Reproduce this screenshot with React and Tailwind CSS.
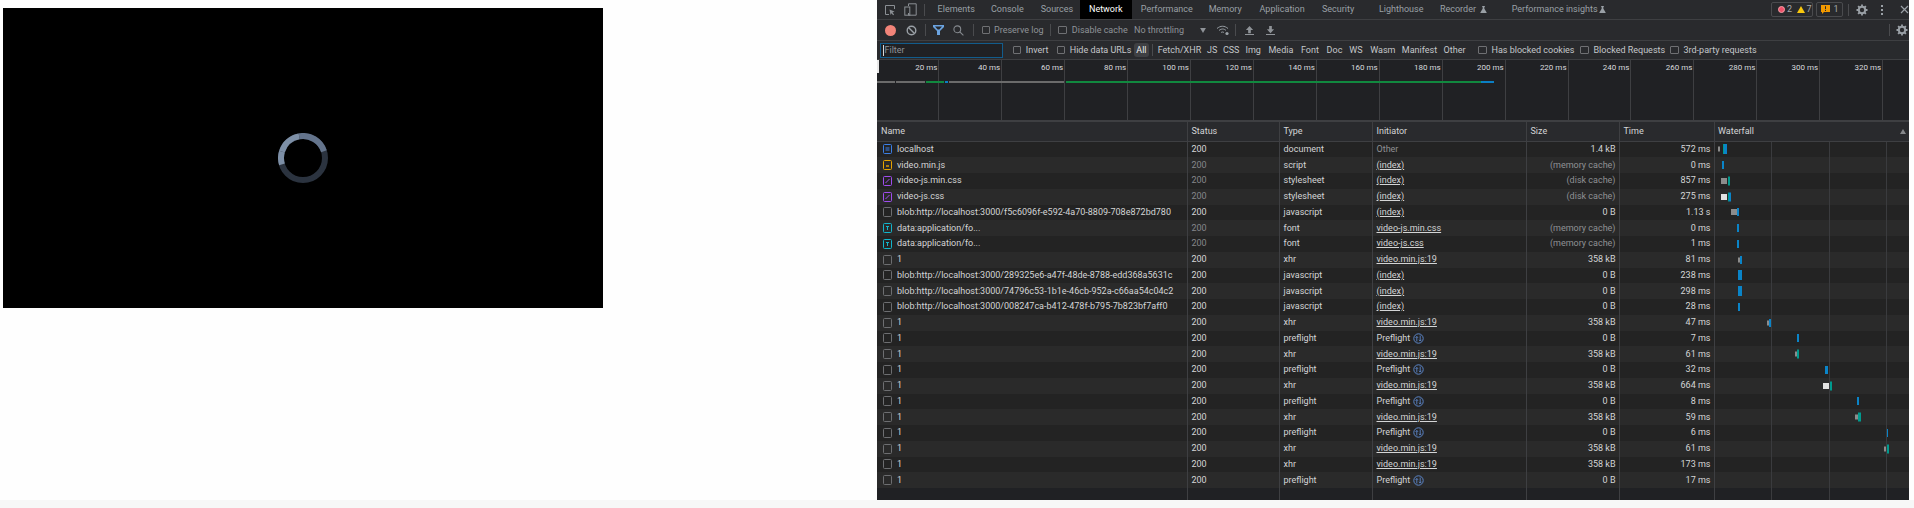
const Check = () => <span className="block flex-none w-[8.5px] h-[8.5px] border border-[#6f7073] rounded-[1px]" />
const Sep = ({ className = '' }) => <span className={`block flex-none w-px h-[12px] bg-[#4a4b4e] ${className}`} />

const Flask = () => (
  <svg viewBox="0 0 8 8" className="w-[7px] h-[7px] flex-none" fill="#9aa0a6">
    <path d="M2.5 0h3v1H5v2.2L7.6 7.4c.2.3 0 .6-.3.6H.7c-.3 0-.5-.3-.3-.6L3 3.2V1h-.5z" />
  </svg>
)

const Gear = () => (
  <svg viewBox="0 0 12 12" className="w-[12px] h-[12px] flex-none" fill="none">
    <circle cx="6" cy="6" r="3.2" stroke="#9aa0a6" strokeWidth="2" />
    <path d="M6 .5v2M6 9.5v2M.5 6h2M9.5 6h2M2.1 2.1l1.4 1.4M8.5 8.5l1.4 1.4M2.1 9.9l1.4-1.4M8.5 3.5l1.4-1.4" stroke="#9aa0a6" strokeWidth="1.8" />
  </svg>
)

const tabs = [
  ['Elements', 'w-[53.4px]'],
  ['Console', 'w-[49.7px]'],
  ['Sources', 'w-[39.3px]'],
]
const tabs2 = [
  ['Performance', 'w-[67.9px]'],
  ['Memory', 'w-[50.8px]'],
  ['Application', 'w-[62.5px]'],
  ['Security', 'w-[57px]'],
  ['Lighthouse', 'w-[61px]'],
  ['Recorder', 'w-[40px]'],
]

const TabBar = () => (
  <div className="h-[20px] flex items-center flex-none bg-[#292a2d] border-b border-[#3e3f42] text-[#9aa0a6]">
    <svg viewBox="0 0 12 12" className="w-[12px] h-[12px] ml-[7px] flex-none" fill="none" stroke="#8b8f94">
      <path d="M5 10.5H1.5v-9h9V5" />
      <path d="M5.5 5.5l5 2-2 1 1.6 2-1 .8-1.6-2-1 1.6z" fill="#8b8f94" stroke="none" />
    </svg>
    <svg viewBox="0 0 13 13" className="w-[13px] h-[13px] ml-[7.5px] flex-none" fill="none" stroke="#8b8f94">
      <path d="M4.5 3V.8h7.7v11.4H4.5V10" />
      <rect x="0.8" y="4" width="5" height="8.2" />
    </svg>
    <Sep className="ml-[7.5px]" />
    <div className="ml-[12.6px] flex items-center h-full whitespace-nowrap">
      {tabs.map(([t, w]) => <span key={t} className={`${w} flex-none`}>{t}</span>)}
      <span className="w-[52px] flex-none h-full flex items-center pl-[9px] bg-black text-white">Network</span>
      <span className="w-[8.8px] flex-none" />
      {tabs2.map(([t, w]) => <span key={t} className={`${w} flex-none`}>{t}</span>)}
      <Flask />
      <span className="ml-[24.7px] w-[87.3px] flex-none">Performance insights</span>
      <Flask />
    </div>
    <div className="ml-auto flex items-center h-full">
      <div className="w-[42.5px] h-[15px] border border-[#4a4b4e] rounded-[2px] flex items-center pl-[6px] text-[#a5a8ac]">
        <span className="w-[7px] h-[7px] rounded-full bg-[#f0526a] border-[1.5px] border-[#f6a0a8] flex-none" />
        <span className="ml-[2.5px] w-[10px]">2</span>
        <svg viewBox="0 0 8 7" className="w-[8px] h-[7px] flex-none"><path d="M4 0l4 7H0z" fill="#f9c80e" /></svg>
        <span className="ml-[1.5px]">7</span>
      </div>
      <div className="ml-[2.5px] w-[27px] h-[15px] border border-[#4a4b4e] rounded-[2px] flex items-center pl-[4px] text-[#a5a8ac]">
        <svg viewBox="0 0 9 9" className="w-[9px] h-[9px] flex-none">
          <path d="M0 0h9v7H3L1 9V7H0z" fill="#f29900" />
          <rect x="4" y="1.2" width="1" height="3" fill="#292a2d" />
          <rect x="4" y="5" width="1" height="1" fill="#292a2d" />
        </svg>
        <span className="ml-[4px]">1</span>
      </div>
      <Sep className="ml-[5.5px]" />
      <span className="ml-[7px] flex"><Gear /></span>
      <span className="ml-[13px] flex flex-col gap-[2px]">
        <span className="w-[2px] h-[2px] bg-[#9aa0a6]" />
        <span className="w-[2px] h-[2px] bg-[#9aa0a6]" />
        <span className="w-[2px] h-[2px] bg-[#9aa0a6]" />
      </span>
      <svg viewBox="0 0 9 9" className="ml-[17px] w-[9px] h-[9px] flex-none" stroke="#9aa0a6" strokeWidth="1.2">
        <path d="M1 1l7 7M8 1l-7 7" />
      </svg>
    </div>
  </div>
)

const Toolbar = () => (
  <div className="h-[21px] flex items-center flex-none bg-[#292a2d] border-b border-[#3e3f42] text-[#8f9398]">
    <span className="ml-[7.5px] w-[11px] h-[11px] rounded-full bg-[#f28479] flex-none" />
    <svg viewBox="0 0 11 11" className="ml-[10px] w-[11px] h-[11px] flex-none" fill="none" stroke="#9aa0a6" strokeWidth="1.4">
      <circle cx="5.5" cy="5.5" r="4.3" />
      <path d="M2.5 2.5l6 6" />
    </svg>
    <Sep className="ml-[8px]" />
    <svg viewBox="0 0 11 10" className="ml-[7.5px] w-[11px] h-[10px] flex-none">
      <path d="M0 0h11v2L7 6v4H4V6L0 2z" fill="#6ba3e0" />
      <path d="M2 1.5h7L6.3 4.5H4.7z" fill="#292a2d" />
    </svg>
    <svg viewBox="0 0 11 11" className="ml-[9px] w-[11px] h-[11px] flex-none" fill="none" stroke="#85898e" strokeWidth="1.1">
      <circle cx="4.3" cy="4.3" r="3.4" />
      <path d="M6.8 6.8l3.6 3.6" />
    </svg>
    <Sep className="ml-[8.5px]" />
    <span className="ml-[8px]"><Check /></span>
    <span className="ml-[4px] w-[48.4px] flex-none whitespace-nowrap">Preserve log</span>
    <Sep className="ml-[7.6px]" />
    <span className="ml-[7.3px]"><Check /></span>
    <span className="ml-[5px] w-[53.2px] flex-none whitespace-nowrap">Disable cache</span>
    <span className="ml-[9px] w-[51.4px] flex-none whitespace-nowrap">No throttling</span>
    <svg viewBox="0 0 7 6" className="ml-[14.6px] w-[6px] h-[5px] flex-none"><path d="M0 0h7L3.5 6z" fill="#8f9398" /></svg>
    <svg viewBox="0 0 14 11" className="ml-[9.6px] w-[14px] h-[11px] flex-none" fill="none" stroke="#9aa0a6" strokeWidth="1">
      <path d="M1 3.5C4.5.5 8.5.5 12 3.5M3 5.5c2.5-2 5-2 7 0M5 7.6c1-.8 2-.8 3 0" />
      <circle cx="11" cy="8.5" r="1.6" fill="#9aa0a6" stroke="none" />
    </svg>
    <Sep className="ml-[5.8px]" />
    <svg viewBox="0 0 10 10" className="ml-[8.4px] w-[9px] h-[9px] flex-none" fill="#8f9398">
      <path d="M5 0l4 4.5H6.5V8h-3V4.5H1zM0 9h10v1H0z" />
    </svg>
    <svg viewBox="0 0 10 10" className="ml-[12.3px] w-[9px] h-[9px] flex-none" fill="#8f9398">
      <path d="M3.5 0h3v3.5H9L5 8 1 3.5h2.5zM0 9h10v1H0z" />
    </svg>
    <div className="ml-auto flex items-center">
      <Sep />
      <span className="ml-[6px] mr-[0.7px] flex"><Gear /></span>
    </div>
  </div>
)

const types = [
  ['Fetch/XHR', 'w-[49.3px]'],
  ['JS', 'w-[16px]'],
  ['CSS', 'w-[22.6px]'],
  ['Img', 'w-[23px]'],
  ['Media', 'w-[32.4px]'],
  ['Font', 'w-[25.7px]'],
  ['Doc', 'w-[22.7px]'],
  ['WS', 'w-[20.9px]'],
  ['Wasm', 'w-[31.7px]'],
  ['Manifest', 'w-[41.7px]'],
  ['Other', 'w-[34.6px]'],
]

const FilterBar = () => (
  <div className="h-[19px] flex items-center flex-none bg-[#292a2d] border-b border-[#3e3f42] text-[#c4c7ca]">
    <div className="ml-[2.5px] w-[123px] h-[15px] flex-none flex items-center border border-[#125c8c] bg-[#202124] pl-[2px] text-[#8f9398]">
      <span className="w-px h-[11px] bg-[#d8d8d8] mr-px" />Filter
    </div>
    <span className="ml-[10.2px]"><Check /></span>
    <span className="ml-[4.6px] w-[22.2px] flex-none">Invert</span>
    <span className="ml-[8.6px]"><Check /></span>
    <span className="ml-[4.7px] w-[59.8px] flex-none whitespace-nowrap">Hide data URLs</span>
    <span className="ml-[4.4px] w-[15px] h-[14px] flex-none flex items-center justify-center rounded-[3px] bg-[#3f4043] text-[#e8eaed]">All</span>
    <Sep className="ml-[3.3px]" />
    <div className="ml-[4.4px] flex items-center">
      {types.map(([t, w]) => <span key={t} className={`${w} flex-none whitespace-nowrap`}>{t}</span>)}
    </div>
    <Check />
    <span className="ml-[4.9px] w-[80.6px] flex-none whitespace-nowrap">Has blocked cookies</span>
    <span className="ml-[8px]"><Check /></span>
    <span className="ml-[4.9px] w-[68.6px] flex-none whitespace-nowrap">Blocked Requests</span>
    <span className="ml-[8px]"><Check /></span>
    <span className="ml-[4.9px] w-[73.3px] flex-none whitespace-nowrap">3rd-party requests</span>
  </div>
)

const ticks = [20, 40, 60, 80, 100, 120, 140, 160, 180, 200, 220, 240, 260, 280, 300, 320]

const strip = [
  'w-[18px] bg-[#6b6b6b]',
  'w-[29px] bg-[#6b6b6b] ml-[1px]',
  'w-[18px] bg-[#11893f] ml-[1px]',
  'w-[3px] bg-[#0b7fc4] ml-[1px]',
  'w-[115px] bg-[#6b6b6b] ml-[1px]',
  'w-[415px] bg-[#11893f] ml-[2px]',
  'w-[13px] bg-[#0b7fc4]',
]

const Overview = () => (
  <div className="relative h-[62px] flex-none flex bg-[#202124] border-b-2 border-[#3e3f42] text-[#d8dade] text-[8px]">
    {ticks.map((t, i) => (
      <div key={t} className={`${i === 0 ? 'w-[62.3px]' : 'w-[62.93px]'} flex-none border-r border-[#3e3f42] text-right pr-[1px] pt-[4px] whitespace-nowrap`}>
        {t} ms
      </div>
    ))}
    <span className="absolute left-0 top-0 w-[1.5px] h-[13px] bg-[#e8e8e8]" />
    <div className="absolute left-0 top-[21px] h-[2px] flex">
      {strip.map((c, i) => <span key={i} className={`block h-full flex-none ${c}`} />)}
    </div>
  </div>
)

const FileIcon = ({ kind }) => {
  if (kind === 'doc') return (
    <svg viewBox="0 0 9 10" className="w-[9px] h-[10px] flex-none" fill="none">
      <rect x="0.5" y="0.5" width="8" height="9" rx="1" stroke="#3b7fe6" />
      <path d="M2.5 4h4M2.5 6h4" stroke="#3b7fe6" />
    </svg>
  )
  if (kind === 'js') return (
    <svg viewBox="0 0 9 10" className="w-[9px] h-[10px] flex-none" fill="none">
      <rect x="0.5" y="0.5" width="8" height="9" rx="1" stroke="#e8a400" />
      <path d="M3 6h3" stroke="#e8a400" strokeWidth="1.4" />
    </svg>
  )
  if (kind === 'css') return (
    <svg viewBox="0 0 9 10" className="w-[9px] h-[10px] flex-none" fill="none">
      <rect x="0.5" y="0.5" width="8" height="9" rx="1" stroke="#a04df0" />
      <path d="M2.5 7l4-4" stroke="#a04df0" />
    </svg>
  )
  if (kind === 'font') return (
    <svg viewBox="0 0 9 10" className="w-[9px] h-[10px] flex-none" fill="none">
      <rect x="0.5" y="0.5" width="8" height="9" rx="1" stroke="#12b5cb" />
      <path d="M3 3.5h3M4.5 3.5v3.5" stroke="#12b5cb" />
    </svg>
  )
  return (
    <svg viewBox="0 0 9 10" className="w-[9px] h-[10px] flex-none" fill="none">
      <rect x="0.5" y="0.5" width="8" height="9" rx="1" stroke="#6d6e71" />
    </svg>
  )
}

const Globe = () => (
  <svg viewBox="0 0 11 11" className="w-[11px] h-[11px] flex-none ml-[2.5px]" fill="none" stroke="#5c86c9">
    <circle cx="5.5" cy="5.5" r="4.7" />
    <path d="M3.8 8.5v-5M2.6 4.8l1.2-1.3L5 4.8M7.2 2.5v5.5M6 6.8l1.2 1.3 1.2-1.3" strokeWidth="0.9" />
  </svg>
)

const INDEX = '(index)'
const VID = 'video.min.js:19'
const B = '#0a84c8'
const T = '#009a8e'
const G = '#8c8c8c'
const W = '#e2e2e2'

// bars: [left from waterfall cell, width, colour, height]
const rows = [
  ['doc', 'localhost', 1, 'document', 'Other', '1.4 kB', '572 ms', [[3, 2, G, 5], [7.7, 1.3, T, 10], [9, 2.7, B, 10]]],
  ['js', 'video.min.js', 0, 'script', INDEX, '(memory cache)', '0 ms', [[6.5, 2, B, 8]]],
  ['css', 'video-js.min.css', 0, 'stylesheet', INDEX, '(disk cache)', '857 ms', [[6, 6, G, 6], [12.7, 2.3, T, 9]]],
  ['css', 'video-js.css', 0, 'stylesheet', INDEX, '(disk cache)', '275 ms', [[6, 6, W, 6], [13, 1, T, 9], [14, 2, B, 9]]],
  ['', 'blob:http://localhost:3000/f5c6096f-e592-4a70-8809-708e872bd780', 1, 'javascript', INDEX, '0 B', '1.13 s', [[16.3, 6, G, 6], [22.3, 2, B, 8]]],
  ['font', 'data:application/fo...', 0, 'font', 'video-js.min.css', '(memory cache)', '0 ms', [[22.3, 1.7, B, 8]]],
  ['font', 'data:application/fo...', 0, 'font', 'video-js.css', '(memory cache)', '1 ms', [[22.3, 1.7, B, 8]]],
  ['', '1', 1, 'xhr', VID, '358 kB', '81 ms', [[22.5, 2, G, 5], [24.7, 2, B, 8]]],
  ['', 'blob:http://localhost:3000/289325e6-a47f-48de-8788-edd368a5631c', 1, 'javascript', INDEX, '0 B', '238 ms', [[23, 3.7, B, 10]]],
  ['', 'blob:http://localhost:3000/74796c53-1b1e-46cb-952a-c66aa54c04c2', 1, 'javascript', INDEX, '0 B', '298 ms', [[23, 3.7, B, 10]]],
  ['', 'blob:http://localhost:3000/008247ca-b412-478f-b795-7b823bf7aff0', 1, 'javascript', INDEX, '0 B', '28 ms', [[23, 2, B, 8]]],
  ['', '1', 1, 'xhr', VID, '358 kB', '47 ms', [[51.7, 2.3, G, 5], [54, 2.3, B, 8]]],
  ['', '1', 1, 'preflight', 'Preflight', '0 B', '7 ms', [[82.3, 2, B, 8]]],
  ['', '1', 1, 'xhr', VID, '358 kB', '61 ms', [[79.7, 2.3, G, 5], [82, 2.3, T, 9]]],
  ['', '1', 1, 'preflight', 'Preflight', '0 B', '32 ms', [[110.3, 2.4, B, 8]]],
  ['', '1', 1, 'xhr', VID, '358 kB', '664 ms', [[108.3, 6, W, 6], [114.3, 2.7, T, 9]]],
  ['', '1', 1, 'preflight', 'Preflight', '0 B', '8 ms', [[142.3, 2, B, 8]]],
  ['', '1', 1, 'xhr', VID, '358 kB', '59 ms', [[140.3, 2.7, G, 5], [143, 2.7, T, 9]]],
  ['', '1', 1, 'preflight', 'Preflight', '0 B', '6 ms', [[171, 2, B, 8]]],
  ['', '1', 1, 'xhr', VID, '358 kB', '61 ms', [[169, 2.7, G, 5], [171.7, 2.6, T, 9]]],
  ['', '1', 1, 'xhr', VID, '358 kB', '173 ms', []],
  ['', '1', 1, 'preflight', 'Preflight', '0 B', '17 ms', []],
]

const grid = 'grid grid-cols-[311px_92px_93px_154px_93px_95px_1fr]'
const cell = 'border-r border-[#3e3f42] flex items-center overflow-hidden whitespace-nowrap'

const Row = ({ row, index }) => {
  const [kind, name, live, type, init, size, time, bars] = row
  const dimSize = size.startsWith('(')
  return (
    <div className={`${grid} h-[15.76px] text-[#d4d5d6] ${index % 2 ? 'bg-[#2a2a2a]' : 'bg-[#232323]'}`}>
      <div className={`${cell} pl-[6px]`}>
        <FileIcon kind={kind} />
        <span className="ml-[5px]">{name}</span>
      </div>
      <div className={`${cell} pl-[3.5px] ${live ? '' : 'text-[#85878a]'}`}>200</div>
      <div className={`${cell} pl-[3.5px]`}>{type}</div>
      <div className={`${cell} pl-[3.5px]`}>
        {init === 'Other' && <span className="text-[#8f9194]">Other</span>}
        {init === 'Preflight' && <><span>Preflight</span><Globe /></>}
        {init !== 'Other' && init !== 'Preflight' && <span className="underline">{init}</span>}
      </div>
      <div className={`${cell} justify-end pr-[3.5px] ${dimSize ? 'text-[#8f9194]' : ''}`}>{size}</div>
      <div className={`${cell} justify-end pr-[3.5px]`}>{time}</div>
      <div className="relative">
        {bars.map(([left, width, color, height], i) => (
          <span
            key={i}
            className="absolute top-1/2 -translate-y-1/2"
            style={{ left, width, height, backgroundColor: color }}
          />
        ))}
      </div>
    </div>
  )
}

const Table = () => (
  <div className="relative flex-1 min-h-0 flex flex-col bg-[#202124]">
    <div className={`${grid} h-[19.5px] flex-none bg-[#292a2d] border-b border-[#3e3f42] text-[#d4d5d6]`}>
      <div className={`${cell} pl-[4px]`}>Name</div>
      <div className={`${cell} pl-[3.5px]`}>Status</div>
      <div className={`${cell} pl-[3.5px]`}>Type</div>
      <div className={`${cell} pl-[3.5px]`}>Initiator</div>
      <div className={`${cell} pl-[3.5px]`}>Size</div>
      <div className={`${cell} pl-[3.5px]`}>Time</div>
      <div className="flex items-center justify-between pl-[3px] pr-[3px]">
        Waterfall
        <svg viewBox="0 0 6 5" className="w-[6px] h-[5px]"><path d="M3 0l3 5H0z" fill="#85878a" /></svg>
      </div>
    </div>
    {rows.map((r, i) => <Row key={i} row={r} index={i} />)}
    <div className={`${grid} flex-1`}>
      <div className={cell} /><div className={cell} /><div className={cell} />
      <div className={cell} /><div className={cell} /><div className={cell} /><div />
    </div>
    <span className="absolute top-[20px] bottom-0 left-[894px] w-px bg-[#3a3b3e]" />
    <span className="absolute top-[20px] bottom-0 left-[952px] w-px bg-[#3a3b3e]" />
    <span className="absolute top-[20px] bottom-0 left-[1009px] w-px bg-[#3a3b3e]" />
  </div>
)

const Spinner = () => (
  <svg viewBox="0 0 50 50" className="w-[50px] h-[50px]" fill="none" strokeWidth="6">
    <circle cx="25" cy="25" r="22" stroke="#2b333f" />
    <path d="M3.96 18.57A22 22 0 0 1 21.18 3.33" stroke="#7d8fa6" />
    <path d="M21.18 3.33A22 22 0 0 1 45.92 18.2" stroke="#64748c" />
    <path d="M3.96 18.57A22 22 0 0 0 3.96 31.43" stroke="#7d8fa6" />
  </svg>
)

const App = () => {
  return (
    <div className="w-[1914px] h-[508px] flex flex-col bg-[#fefefe] overflow-hidden font-['Roboto',sans-serif] text-[9px] leading-none">
      <div className="h-[500px] flex-none flex">
        <div className="w-[877px] flex-none pt-2 pl-[3px]">
          <div className="w-[600px] h-[300px] bg-black flex items-center justify-center">
            <Spinner />
          </div>
        </div>
        <div className="w-[1032px] flex-none flex flex-col overflow-hidden bg-[#202124]">
          <TabBar />
          <Toolbar />
          <FilterBar />
          <Overview />
          <Table />
        </div>
      </div>
      <div className="flex-1 bg-[#f7f7f7]" />
    </div>
  )
}

export default App
